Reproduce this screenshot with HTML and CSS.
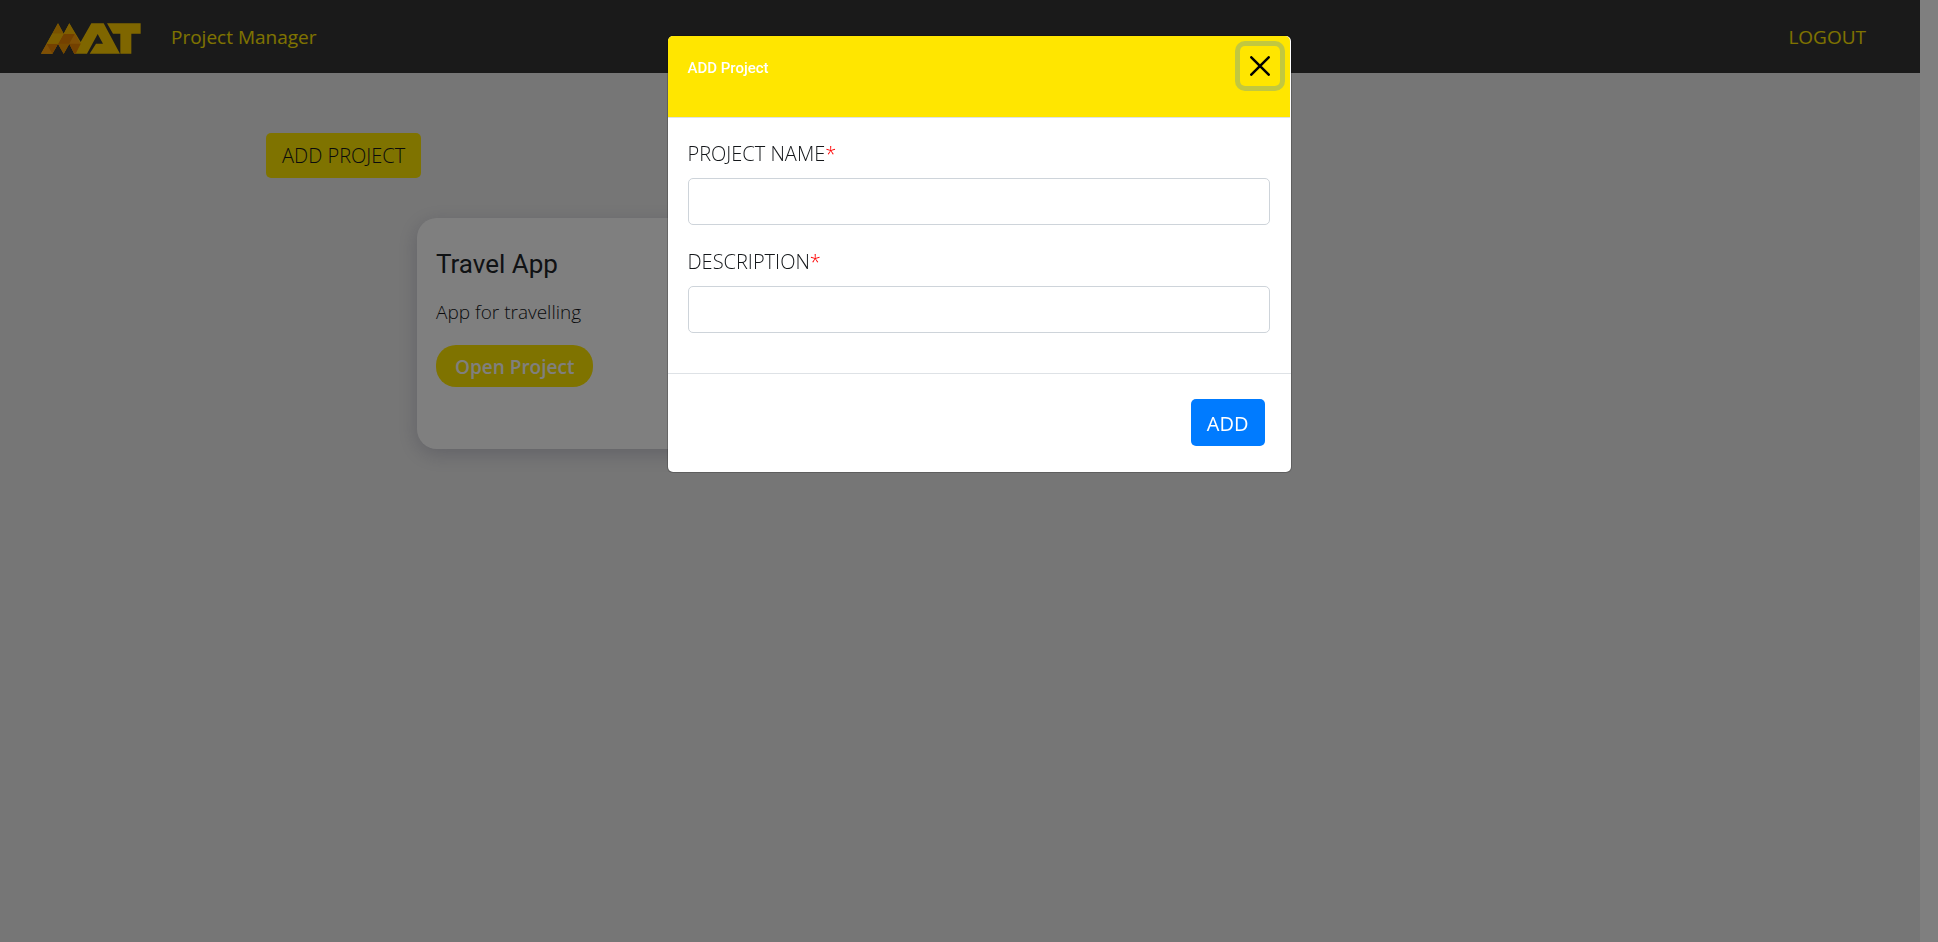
FILE: index.html
```html
<!DOCTYPE html>
<html lang="en">
<head>
<meta charset="utf-8">
<meta name="viewport" content="width=device-width, initial-scale=1">
<title>Project Manager</title>
<link rel="stylesheet" href="styles.css">
</head>
<body>
<div class="page">
  <header class="navbar">
    <a class="brand" href="#" aria-label="MAT home">
      <svg class="logo" viewBox="122 69 300 93" aria-hidden="true">
        <path fill="#ffcc00" d="M122 161 173 70 190 101 207 70 226 101 241 126 273 70H310L359 161H268L287 131H308L292 102 260 161H222L207 131 190 161 173 131 156 161Z"/>
        <path fill="#ffcc00" d="M320 70H421V101H393V161H360V101H338Z"/>
        <path fill="#ff9f0a" d="M122 161 139 131H173L156 161ZM207 131 224 101 241 131 222 161Z"/>
        <path fill="#f5a400" d="M156 101 173 70 190 101Z"/>
        <path fill="#e88300" d="M156 161 139 131H173ZM173 131 190 101H224L207 131 190 161ZM207 131H241L226 161H222Z"/>
        <path fill="#ee9500" d="M173 131H207L190 161Z"/>
        <path fill="#ffbf00" d="M156 101H190L173 131H139ZM190 101 207 70 224 101Z"/>
      </svg>
    </a>
    <a class="nav-link" href="#">Project Manager</a>
    <a class="nav-link logout" href="#">LOGOUT</a>
  </header>
  <main class="content">
    <button class="add-project" type="button">ADD PROJECT</button>
    <article class="card">
      <h2 class="card-title">Travel App</h2>
      <p class="card-text">App for travelling</p>
      <button class="open-project" type="button">Open Project</button>
    </article>
  </main>
</div>
<div class="overlay">
  <form class="modal" role="dialog" aria-modal="true" aria-labelledby="modal-title">
    <div class="modal-header">
      <h1 class="modal-title" id="modal-title">ADD Project</h1>
      <button class="close" type="button" aria-label="Close">
        <svg viewBox="0 0 20 20" aria-hidden="true"><path d="M1.3 1.3 18.7 18.7M18.7 1.3 1.3 18.7" stroke="#000" stroke-width="2.5" stroke-linecap="round"/></svg>
      </button>
    </div>
    <div class="modal-body">
      <label class="label" for="name">PROJECT NAME<span class="required">*</span></label>
      <input class="field" id="name" type="text">
      <label class="label" for="description">DESCRIPTION<span class="required">*</span></label>
      <input class="field" id="description" type="text">
    </div>
    <div class="modal-footer">
      <button class="submit" type="submit">ADD</button>
    </div>
  </form>
</div>
</body>
</html>
```
FILE: styles.css
```css
* { box-sizing: border-box; }
body {
  margin: 0;
  background: #fff;
  color: #14171a;
  font: 300 19px/30px "Segoe UI", "Open Sans", sans-serif;
}
button, input { font: inherit; color: inherit; }
.page {
  min-height: 100vh;
  margin-right: 18px;
  background: #ededed;
}
.navbar {
  display: flex;
  align-items: center;
  height: 73px;
  padding: 0 54px 0 41px;
  background: #353535;
}
.brand { display: flex; margin-right: 30px; padding-top: 4px; }
.logo { width: 100px; height: 31px; }
.nav-link {
  color: #ffe600;
  font-weight: 400;
  text-decoration: none;
}
.logout { margin-left: auto; }
.content { padding: 60px 266px; }
.add-project {
  display: block;
  height: 45px;
  padding: 0 16px;
  border: 0;
  border-radius: 5px;
  background: #ffe600;
  font-size: 20px;
}
.card {
  width: 460px;
  max-width: 100%;
  min-height: 231px;
  margin: 40px 0 0 151px;
  padding: 28px 19px;
  border-radius: 20px;
  background: #fff;
  box-shadow: 0 5px 20px rgba(70, 70, 110, .25);
}
.card-title {
  margin: 0 0 15px;
  color: #212529;
  font: 400 26px/36px Roboto, sans-serif;
}
.card-text { margin: 0 0 18px; }
.open-project {
  height: 42px;
  padding: 1px 19px 0;
  border: 0;
  border-radius: 20px;
  background: #ffe600;
  color: #fff;
  font-weight: 600;
}
.overlay {
  position: fixed;
  inset: 0;
  padding: 35px 0 0 20px;
  background: rgba(0, 0, 0, .5);
}
.modal {
  width: 625px;
  max-width: 100%;
  margin: 0 auto;
  border: 1px solid rgba(0, 0, 0, .2);
  border-radius: 6px;
  background: #fff;
  background-clip: padding-box;
}
.modal-header {
  display: flex;
  justify-content: space-between;
  align-items: flex-start;
  height: 82px;
  margin-right: 1px;
  padding: 10px 10px 0 20px;
  border-bottom: 1px solid #dee2e6;
  border-radius: 5px 5px 0 0;
  background: #ffe600;
}
.modal-title {
  margin: 10px 0 0;
  color: #fff;
  font: 500 15px/24px Roboto, sans-serif;
}
.close {
  width: 40px;
  height: 40px;
  padding: 10px;
  border: 0;
  border-radius: 5px;
  background: transparent;
  box-shadow: 0 0 0 5px rgba(13, 110, 253, .25);
}
.close svg { display: block; }
.modal-body { padding: 21px 21px 40px 20px; }
.label { display: block; margin-bottom: 9px; font-size: 20px; }
.required { color: #f00; }
.field {
  display: block;
  width: 100%;
  height: 47px;
  padding: 8px 15px;
  border: 1px solid #ced4da;
  border-radius: 5px;
  background: #fff;
}
.field + .label { margin-top: 22px; }
.modal-footer {
  display: flex;
  justify-content: flex-end;
  padding: 25px 26px 26px;
  border-top: 1px solid #dee2e6;
}
.submit {
  height: 47px;
  padding: 2px 16px 0;
  border: 0;
  border-radius: 5px;
  background: #007bff;
  color: #fff;
  font-size: 20px;
  font-weight: 400;
}
```
